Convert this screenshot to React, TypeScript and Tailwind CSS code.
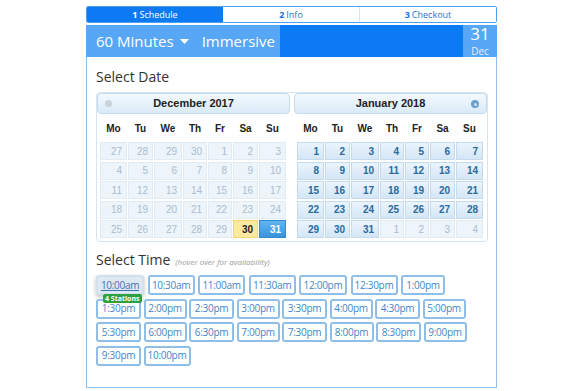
import React from "react";

const COLS = "grid grid-cols-[27px_25px_28px_24px_24px_25px_27px] gap-x-[1px]";
const DAYS = ["Mo", "Tu", "We", "Th", "Fr", "Sa", "Su"];

type Cell = { n: number; kind: "faded" | "active" | "today" | "sel" };

function range(a: number, b: number) {
  const r: number[] = [];
  for (let i = a; i <= b; i++) r.push(i);
  return r;
}

const decRows: Cell[][] = [
  [27, 28, 29, 30, 1, 2, 3],
  range(4, 10),
  range(11, 17),
  range(18, 24),
  range(25, 31),
].map((row) =>
  row.map((n, i) => ({
    n,
    kind: n === 30 && i === 5 ? "today" : n === 31 ? "sel" : "faded",
  }))
);

const janRows: Cell[][] = [
  range(1, 7),
  range(8, 14),
  range(15, 21),
  range(22, 28),
  [29, 30, 31, 1, 2, 3, 4],
].map((row, ri) =>
  row.map((n, i) => ({ n, kind: ri === 4 && i >= 3 ? "faded" : "active" }))
);

function DayCell({ c }: { c: Cell }) {
  const base =
    "h-[18px] flex items-center justify-end pr-[4px] text-[10px] border";
  if (c.kind === "faded")
    return (
      <div className={`${base} bg-[#edf4fa] border-[#e1ebf4] text-[#a9bdcf]`}>
        {c.n}
      </div>
    );
  if (c.kind === "today")
    return (
      <div className={`${base} bg-[#fbe9a1] border-[#f1d875] text-[#222] font-bold`}>
        {c.n}
      </div>
    );
  if (c.kind === "sel")
    return (
      <div
        className={`${base} bg-gradient-to-b from-[#62b4ec] to-[#3a93da] border-[#3189d0] text-white font-bold`}
      >
        {c.n}
      </div>
    );
  return (
    <div
      className={`${base} bg-gradient-to-b from-[#eaf4fd] to-[#d4e6f6] border-[#c5dbec] text-[#2b6a9c] font-bold`}
    >
      {c.n}
    </div>
  );
}

function Month({
  title,
  rows,
  prev,
  next,
}: {
  title: string;
  rows: Cell[][];
  prev?: boolean;
  next?: boolean;
}) {
  return (
    <div className="w-[193px] flex flex-col">
      <div className="relative h-[21px] rounded-[4px] border border-[#c5dbec] bg-gradient-to-b from-[#f3f9fe] to-[#d9eaf8] flex items-center justify-center">
        <span className="text-[11px] font-bold text-[#222]">{title}</span>
        {prev && (
          <span className="absolute left-[7px] top-[6px] w-[7px] h-[7px] rounded-full bg-[#c9d3dc]" />
        )}
        {next && (
          <span className="absolute right-[7px] top-[6px] w-[8px] h-[8px] rounded-full bg-[#6d9fcb] flex items-center justify-center">
            <span className="w-[3px] h-[3px] rounded-full bg-[#cfe2f3]" />
          </span>
        )}
      </div>
      <div className="px-[3px]">
        <div className={`${COLS} h-[28px] items-center`}>
          {DAYS.map((d) => (
            <div key={d} className="text-center text-[10px] font-bold text-[#222]">
              {d}
            </div>
          ))}
        </div>
        <div className="flex flex-col gap-[1.5px]">
          {rows.map((row, ri) => (
            <div key={ri} className={COLS}>
              {row.map((c, ci) => (
                <DayCell key={ci} c={c} />
              ))}
            </div>
          ))}
        </div>
      </div>
    </div>
  );
}

type Btn = { t: string; w: number };

const timeRows: { gap: string; items: Btn[] }[] = [
  {
    gap: "gap-[3.5px]",
    items: [
      { t: "10:00am", w: 48 },
      { t: "10:30am", w: 47 },
      { t: "11:00am", w: 47 },
      { t: "11:30am", w: 47 },
      { t: "12:00pm", w: 48 },
      { t: "12:30pm", w: 47 },
      { t: "1:00pm", w: 44 },
    ],
  },
  {
    gap: "gap-[2.5px]",
    items: [
      { t: "1:30pm", w: 45 },
      { t: "2:00pm", w: 43 },
      { t: "2:30pm", w: 45 },
      { t: "3:00pm", w: 43 },
      { t: "3:30pm", w: 45 },
      { t: "4:00pm", w: 43 },
      { t: "4:30pm", w: 45 },
      { t: "5:00pm", w: 43 },
    ],
  },
  {
    gap: "gap-[2.5px]",
    items: [
      { t: "5:30pm", w: 45 },
      { t: "6:00pm", w: 43 },
      { t: "6:30pm", w: 45 },
      { t: "7:00pm", w: 43 },
      { t: "7:30pm", w: 45 },
      { t: "8:00pm", w: 44 },
      { t: "8:30pm", w: 45 },
      { t: "9:00pm", w: 43 },
    ],
  },
  {
    gap: "gap-[2.5px]",
    items: [
      { t: "9:30pm", w: 45 },
      { t: "10:00pm", w: 47 },
    ],
  },
];

export default function App() {
  return (
    <div
      className="w-[584px] h-[391px] bg-white overflow-hidden"
      style={{ fontFamily: '"Open Sans", "Liberation Sans", sans-serif' }}
    >
      <div className="ml-[86px] w-[411px] pt-[6px]">
        {/* steps */}
        <div className="h-[17px] flex border border-[#4f9ff0] rounded-[2px] overflow-hidden text-[9px] leading-none">
          <div className="flex-1 bg-[#0c7bf3] text-white flex items-center justify-center gap-[2px]">
            <b>1</b>
            <span>Schedule</span>
          </div>
          <div className="flex-1 bg-white text-[#1f72cf] flex items-center justify-center gap-[2px] border-r border-[#d9e6f2]">
            <b>2</b>
            <span>Info</span>
          </div>
          <div className="flex-1 bg-white text-[#1f72cf] flex items-center justify-center gap-[2px]">
            <b>3</b>
            <span>Checkout</span>
          </div>
        </div>

        {/* header */}
        <div className="mt-[2px] h-[32px] flex rounded-t-[2px]">
          <div className="w-[194px] bg-[#58a6f6] flex items-center pl-[10px] text-white text-[15px] leading-none">
            <span>60 Minutes</span>
            <svg width="9" height="6" viewBox="0 0 9 6" className="ml-[6px] mt-[1px]">
              <path d="M0 0 H9 L4.5 5 Z" fill="white" />
            </svg>
            <span className="ml-[13px]">Immersive</span>
          </div>
          <div className="flex-1 bg-[#0c7bf3]" />
          <div className="w-[34px] bg-[#58a6f6] flex flex-col items-center justify-center text-white">
            <span className="text-[17px] leading-[16px]">31</span>
            <span className="text-[10px] leading-[10px] mt-[4px] text-[#e6f1fe]">Dec</span>
          </div>
        </div>

        {/* panel */}
        <div className="h-[331px] border-x border-b border-[#8ec1ed] pl-[9px] pr-[8px] pt-[10px]">
          <div className="text-[14px] leading-[20px] text-[#333]">Select Date</div>
          <div
            className="mt-[5px] w-[392px] h-[150px] border border-[#d5e4f0] rounded-[4px] flex"
            style={{ fontFamily: '"Liberation Sans", Arial, sans-serif' }}
          >
            <Month title="December 2017" rows={decRows} prev />
            <div className="w-[4px]" />
            <Month title="January 2018" rows={janRows} next />
          </div>

          <div className="mt-[8px] flex items-baseline leading-[20px]">
            <span className="text-[14px] text-[#333]">Select Time</span>
            <span className="ml-[5px] text-[8px] italic text-[#9a9a9a]">
              (hover over for availability)
            </span>
          </div>

          <div className="mt-[3px] flex flex-col gap-[3.5px]">
            {timeRows.map((row, ri) => (
              <div key={ri} className={`flex ${row.gap}`}>
                {row.items.map((b, bi) => {
                  const hl = ri === 0 && bi === 0;
                  return (
                    <div key={b.t} className="relative">
                      <div
                        style={{ width: b.w }}
                        className={
                          hl
                            ? "h-[20px] flex items-center justify-center rounded-[3px] border-2 border-[#d3e1ee] bg-[#dde8f3] shadow-[0_2px_4px_rgba(0,0,0,0.25)] text-[10px] text-[#3b74b0] underline tracking-[-0.3px]"
                            : "h-[20px] flex items-center justify-center rounded-[3px] border-2 border-[#8fbfe9] bg-white text-[10px] text-[#3f86c8] tracking-[-0.3px]"
                        }
                      >
                        {b.t}
                      </div>
                      {hl && (
                        <div className="absolute left-[7px] top-[19px] h-[9px] px-[2px] rounded-[2px] bg-[#2ea043] text-white text-[7px] font-bold leading-[9px] whitespace-nowrap z-10">
                          4 Stations
                        </div>
                      )}
                    </div>
                  );
                })}
              </div>
            ))}
          </div>
        </div>
      </div>
    </div>
  );
}
